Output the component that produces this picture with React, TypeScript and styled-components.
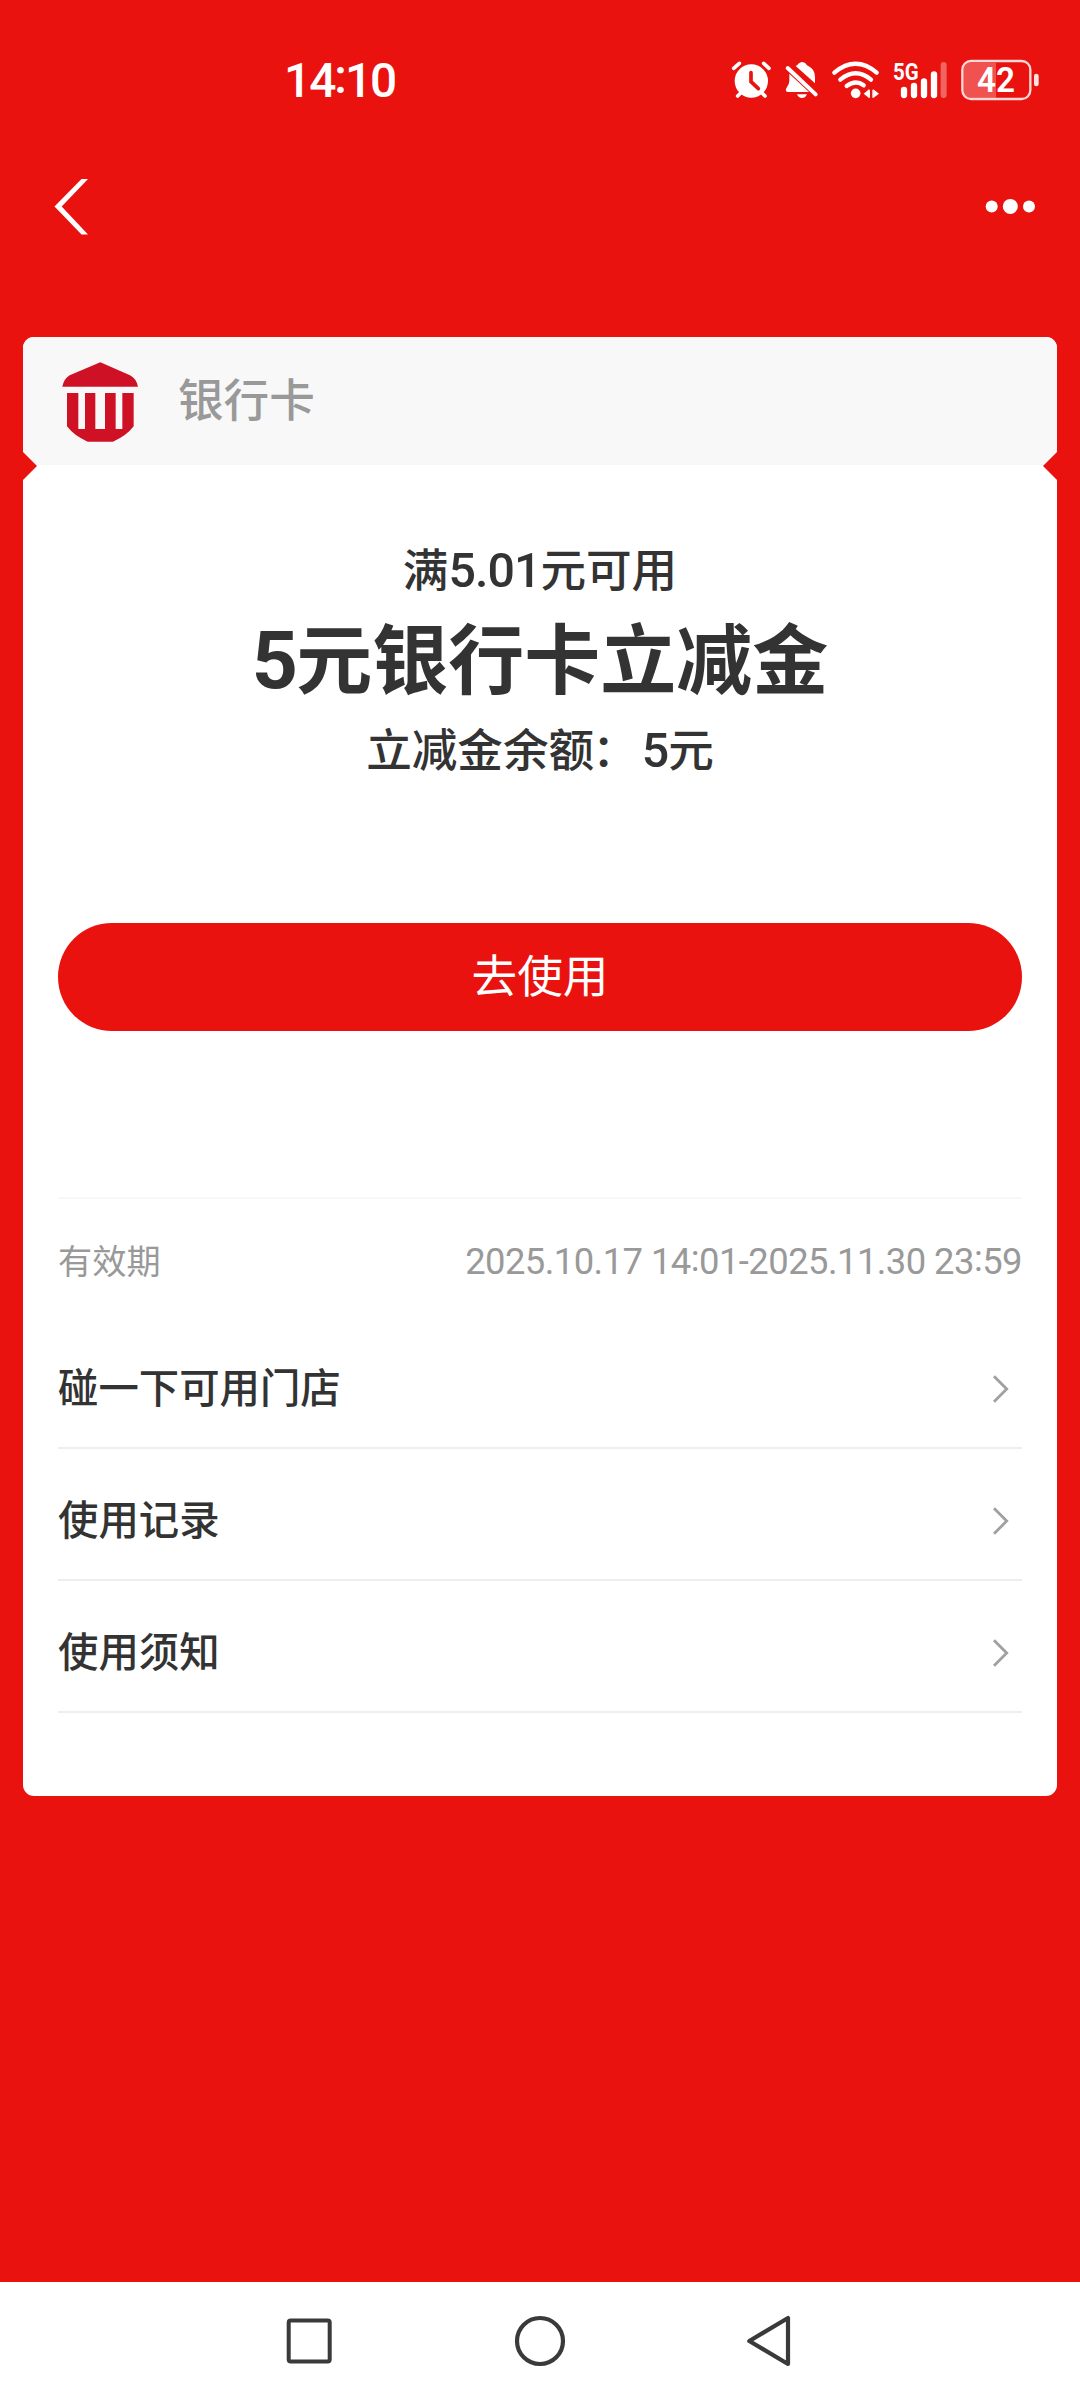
import React from 'react';
import styled, { createGlobalStyle } from 'styled-components';

const RED = '#e9120f';
const INK = '#333333';
const MUTED = '#999999';

const GlobalStyle = createGlobalStyle`
  * { box-sizing: border-box; }
  body {
    margin: 0;
    background: ${RED};
    font-family: "Noto Sans CJK SC", "Noto Sans", sans-serif;
  }
  svg { display: block; flex: none; overflow: visible; }
`;

const Screen = styled.div`
  display: flex;
  flex-direction: column;
  width: 1080px;
  height: 2400px;
  background: ${RED};
  overflow: hidden;
`;

const StatusBar = styled.header`
  display: flex;
  align-items: center;
  justify-content: space-between;
  height: 160px;
  padding: 0 40px 0 284px;
`;

const Clock = styled.time`
  color: #fff;
  font-family: Roboto, sans-serif;
  font-size: 47.8px;
  font-weight: 500;
  letter-spacing: -2px;
  line-height: 60px;
  margin-top: 2px;
`;

const Colon = styled.span`
  line-height: 0;
  vertical-align: 0.09em;
`;

const WideColon = styled.span`
  margin: 0 4px 0 -2px;
`;

const Digits = styled.span`
  font-family: Roboto, sans-serif;
  font-size: 1.06em;
  letter-spacing: -0.02em;
  line-height: 0;
`;

const StatusIcons = styled.div`
  display: flex;
  align-items: center;
`;

const IconSlot = styled.div<{ $before?: number }>`
  margin-left: ${(p) => p.$before ?? 0}px;
`;

const TitleBar = styled.nav`
  display: flex;
  align-items: center;
  justify-content: space-between;
  height: 92px;
  padding: 1px 44px 0 54px;
`;

const IconButton = styled.button`
  display: flex;
  padding: 0;
  border: 0;
  background: none;
`;

const Card = styled.main`
  display: flex;
  flex-direction: column;
  height: 1459px;
  margin: 85px 23px 0;
  border-radius: 11px;
  background: #fff;
  overflow: hidden;
`;

const CardHead = styled.div`
  position: relative;
  display: flex;
  align-items: center;
  gap: 39px;
  height: 128px;
  padding: 1px 0 0 39px;
  background: #f8f8f8;
`;

const CardLabel = styled.span`
  color: ${MUTED};
  font-size: 45.6px;
  font-weight: 500;
  line-height: 66px;
  margin-top: -10px;
`;

const Notch = styled.i<{ $side: 'left' | 'right' }>`
  position: absolute;
  bottom: -15px;
  ${(p) => p.$side}: 0;
  width: 14px;
  height: 28px;
  background: ${RED};
  clip-path: ${(p) =>
    p.$side === 'left' ? 'polygon(0 0, 100% 50%, 0 100%)' : 'polygon(100% 0, 0 50%, 100% 100%)'};
`;

const CardBody = styled.div`
  display: flex;
  flex-direction: column;
  padding: 0 35px;
`;

const Offer = styled.section`
  display: flex;
  flex-direction: column;
  align-items: center;
  padding-top: 69px;
  color: ${INK};
  text-align: center;
`;

const OfferLine = styled.p`
  margin: 0;
  font-size: 45.6px;
  font-weight: 500;
  line-height: 66px;
`;

const OfferTitle = styled.h1`
  margin: 0;
  font-size: 76px;
  font-weight: 700;
  line-height: 110px;
  padding: 0 0 4px;
`;

const UseButton = styled.button`
  display: flex;
  align-items: center;
  justify-content: center;
  height: 108px;
  margin-top: 143px;
  padding: 0 0 8px;
  border: 0;
  border-radius: 54px;
  background: ${RED};
  color: #fff;
  font-family: inherit;
  font-size: 45.6px;
  line-height: 66px;
`;

const Validity = styled.div`
  display: flex;
  align-items: center;
  justify-content: space-between;
  height: 120px;
  margin-top: 166px;
  border-top: 2px solid #f8f8f8;
  color: ${MUTED};
  line-height: 50px;
  padding-top: 1px;
`;

const ValidityLabel = styled.span`
  font-size: 34.2px;
`;

const ValidityRange = styled.span`
  font-family: Roboto, sans-serif;
  font-size: 36.4px;
  letter-spacing: -0.55px;
  padding-top: 7px;
`;

const Row = styled.a`
  display: flex;
  align-items: center;
  justify-content: space-between;
  height: 132px;
  padding: 13px 12px 0 0;
  border-bottom: 2px solid #eeeeee;
  color: ${INK};
`;

const RowLabel = styled.span`
  font-size: 40.4px;
  font-weight: 500;
  line-height: 58px;
  margin-top: -6px;
`;

const SystemNav = styled.footer`
  display: flex;
  align-items: center;
  justify-content: center;
  gap: 178px;
  height: 118px;
  margin-top: auto;
  background: #fff;
`;

const AlarmIcon = () => (
  <svg width="41" height="42" viewBox="93 57 123 126" fill="none" strokeLinecap="round">
    <circle cx="154" cy="123" r="50" fill="#fff" />
    <path d="M101 85 118 70M191 70l16 15M113 168l12-12M195 168l-12-12" stroke="#fff" strokeWidth="11" />
    <path d="M153 98v27l22 21" stroke={RED} strokeWidth="11" />
  </svg>
);

const MutedBellIcon = () => (
  <svg width="34" height="42" viewBox="252 57 102 126" fill="none">
    <path d="M287 78q6-3 8-7 12-10 23 0 2 5 7 7 20 10 20 32v20z" fill="#fff" />
    <path d="M268 101v22q0 10-7 18-6 8-3 12 2 3 7 3h62z" fill="#fff" />
    <path d="M291 163h30q-4 11-15 11t-15-11z" fill="#fff" />
    <path d="M263 84 347 163" stroke="#fff" strokeWidth="12" strokeLinecap="round" />
  </svg>
);

const WifiIcon = () => (
  <svg width="49" height="42" viewBox="393 57 147 126" fill="none" strokeLinecap="round">
    <path d="M403 98q64-53 127 0M421 119q46-38 92 0M440 138q27-20 51-2" stroke="#fff" strokeWidth="13" />
    <circle cx="467" cy="160" r="14.500" fill="#fff" />
    <path d="M491 161l16-13v26zM537 161l-17-13v26z" fill="#fff" />
    <path d="M508 149v24M519 149v24" stroke="#fff" strokeWidth="4" strokeLinecap="butt" />
  </svg>
);

const SignalIcon = () => (
  <svg width="54" height="42" viewBox="579 57 162 126" fill="none" strokeLinecap="round">
    <text
      x="579"
      y="119"
      fill="#fff"
      fontFamily="Roboto, sans-serif"
      fontWeight="700"
      fontSize="73"
      textLength="77"
      lengthAdjust="spacingAndGlyphs"
    >
      5G
    </text>
    <path d="M612 150v15M642 138v27M672 124v41M702 103v62" stroke="#fff" strokeWidth="19" />
    <path d="M731 75v90" stroke="#fff" strokeOpacity="0.35" strokeWidth="18" />
  </svg>
);

const BatteryIcon = () => (
  <svg width="79" height="42" viewBox="783 57 237 126" fill="none">
    <path d="M888 68v105h-78q-20 0-20-20V88q0-20 20-20z" fill="#fff" fillOpacity="0.27" />
    <rect x="787" y="63" width="204" height="114" rx="26" stroke="#ffd9d8" strokeWidth="7" />
    <path d="M1009 108v24" stroke="#ffe4e3" strokeWidth="14" strokeLinecap="round" />
    <text
      x="831"
      y="156"
      fill="#fff"
      fontFamily="Roboto, sans-serif"
      fontWeight="600"
      fontSize="104"
      textLength="114"
      lengthAdjust="spacingAndGlyphs"
    >
      42
    </text>
  </svg>
);

const BackIcon = () => (
  <svg width="36" height="58" viewBox="0 0 36 58">
    <path d="M27.500 1h6.500L7.700 28.500 34 56.500h-6.500L.5 28.500z" fill="#fff" />
  </svg>
);

const MoreIcon = () => (
  <svg width="50" height="16" viewBox="0 0 50 16" fill="#fff">
    <circle cx="5.700" cy="7.400" r="6" />
    <circle cx="24.300" cy="7.400" r="7.500" />
    <circle cx="43" cy="7.400" r="6" />
  </svg>
);

const BankIcon = () => (
  <svg width="77" height="80" viewBox="187 124 231 240" fill="#cf1126">
    <path d="M302 125 391 164q19 10 24 34H188q5-24 22-34z" />
    <path d="M202 217h34v108h20V217h31v108h29V217h32v108h20V217h34v100q-22 29-62 46h-76q-40-17-62-46z" />
  </svg>
);

const ChevronIcon = () => (
  <svg width="18" height="28" viewBox="0 0 18 28" fill="none">
    <path d="M2 1.300 14.700 14 2 26.700" stroke="#a0a0a0" strokeWidth="2.800" />
  </svg>
);

const RecentsIcon = () => (
  <svg width="50" height="50" viewBox="0 0 50 50" fill="none">
    <rect x="3.700" y="4.500" width="41" height="41" rx="2" stroke="#3a3a3a" strokeWidth="4" />
  </svg>
);

const HomeIcon = () => (
  <svg width="54" height="54" viewBox="0 0 54 54" fill="none">
    <circle cx="27" cy="27" r="23" stroke="#3a3a3a" strokeWidth="4.200" />
  </svg>
);

const NavBackIcon = () => (
  <svg width="50" height="54" viewBox="0 0 50 54" fill="none">
    <path d="M4.300 27 43 4v46z" stroke="#3a3a3a" strokeWidth="4.200" strokeLinejoin="round" />
  </svg>
);

const links = ['碰一下可用门店', '使用记录', '使用须知'];

export default function App() {
  return (
    <Screen>
      <GlobalStyle />
      <StatusBar>
        <Clock>
          14<Colon>:</Colon>10
        </Clock>
        <StatusIcons>
          <IconSlot><AlarmIcon /></IconSlot>
          <IconSlot $before={12}><MutedBellIcon /></IconSlot>
          <IconSlot $before={13}><WifiIcon /></IconSlot>
          <IconSlot $before={13}><SignalIcon /></IconSlot>
          <IconSlot $before={14}><BatteryIcon /></IconSlot>
        </StatusIcons>
      </StatusBar>
      <TitleBar>
        <IconButton aria-label="返回"><BackIcon /></IconButton>
        <IconButton aria-label="更多"><MoreIcon /></IconButton>
      </TitleBar>
      <Card>
        <CardHead>
          <BankIcon />
          <CardLabel>银行卡</CardLabel>
          <Notch $side="left" />
          <Notch $side="right" />
        </CardHead>
        <CardBody>
          <Offer>
            <OfferLine>满<Digits>5.01</Digits>元可用</OfferLine>
            <OfferTitle><Digits>5</Digits>元银行卡立减金</OfferTitle>
            <OfferLine>立减金余额<WideColon>：</WideColon><Digits>5</Digits>元</OfferLine>
          </Offer>
          <UseButton>去使用</UseButton>
          <Validity>
            <ValidityLabel>有效期</ValidityLabel>
            <ValidityRange>
              2025.10.17 14<Colon>:</Colon>01-2025.11.30 23<Colon>:</Colon>59
            </ValidityRange>
          </Validity>
          {links.map((label) => (
            <Row key={label}>
              <RowLabel>{label}</RowLabel>
              <ChevronIcon />
            </Row>
          ))}
        </CardBody>
      </Card>
      <SystemNav>
        <RecentsIcon />
        <HomeIcon />
        <NavBackIcon />
      </SystemNav>
    </Screen>
  );
}
